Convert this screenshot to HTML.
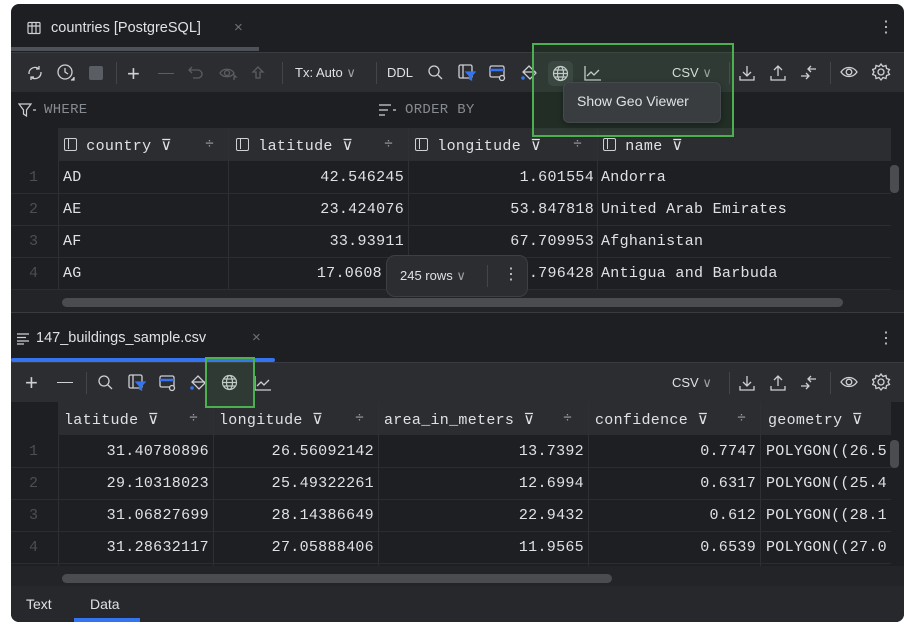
<!DOCTYPE html>
<html><head><meta charset="utf-8"><style>
*{margin:0;padding:0;box-sizing:border-box}
body{width:909px;height:627px;background:#fff;position:relative;overflow:hidden;font-family:"Liberation Sans",sans-serif;color:#dfe1e5}
.a{position:absolute}
#panel{left:11px;top:4px;width:893px;height:618px;background:#1e1f22;border-radius:8px;overflow:hidden}
.ui{font-size:14px;white-space:nowrap}
.mono{font-family:"Liberation Mono",monospace;font-size:15px;white-space:nowrap;letter-spacing:0.3px}
.tb{background:#2b2d30}
.sep{position:absolute;width:1px;height:22px;background:#43454a}
.hl{position:absolute;height:1px;background:#2b2d30}
.vl{position:absolute;width:1px;background:#2e3034}
.num{color:#4b4e54}
.r{text-align:right}
.green{position:absolute;border:2px solid #4cb050;background:rgba(76,176,80,0.10)}
</style></head><body>
<div id="panel" class="a"></div>

<svg class="a" style="left:27px;top:21px" width="14" height="14" viewBox="0 0 14 14" fill="none" stroke="#ced0d6" stroke-width="1.2"><rect x="1" y="1.5" width="12" height="11" rx="1"/><path d="M1 5h12M5 1.5v11M9 1.5v11"/></svg>
<div class="a ui" style="left:51px;top:20px;font-size:14.5px">countries [PostgreSQL]</div>
<div class="a ui" style="left:234px;top:19px;color:#6f737a;font-size:15px">×</div>
<div class="a ui" style="left:878px;top:17px;font-size:16px;color:#ced0d6">⋮</div>
<div class="a" style="left:11px;top:47px;width:248px;height:4px;background:#4e5157"></div>

<div class="a tb" style="left:11px;top:52px;width:893px;height:40px;border-top:1px solid #393b40"></div>
<svg class="a" style="left:26px;top:65px" width="18" height="16" viewBox="0 0 18 16" fill="none" stroke="#ced0d6" stroke-width="1.3"><path d="M3 9a6 6 0 0 1 10-5M15 7a6 6 0 0 1-10 5"/><path d="M13 1v3h-3M5 15v-3h3"/></svg>
<svg class="a" style="left:57px;top:64px" width="18" height="18" viewBox="0 0 18 18" fill="none" stroke="#ced0d6" stroke-width="1.3"><circle cx="8" cy="8" r="7"/><path d="M8 4v4l3 2"/><path d="M14 16h3v-3" fill="#ced0d6"/></svg>
<div class="a" style="left:89px;top:66px;width:14px;height:14px;background:#5a5d63;border-radius:2px"></div>
<div class="sep" style="left:116px;top:62px"></div>
<div class="a ui" style="left:127px;top:61px;font-size:22px;color:#ced0d6;font-weight:300">+</div>
<div class="a" style="left:158px;top:73px;width:16px;height:1.3px;background:#5a5d63"></div>
<svg class="a" style="left:188px;top:65px" width="16" height="16" viewBox="0 0 16 16" fill="none" stroke="#5a5d63" stroke-width="1.3"><path d="M4 2L1 5l3 3M1 5h9a4 4 0 0 1 0 8H5"/></svg>
<svg class="a" style="left:219px;top:65px" width="20" height="16" viewBox="0 0 20 16" fill="none" stroke="#5a5d63" stroke-width="1.3"><path d="M1 8c3-5 11-5 14 0c-3 5-11 5-14 0z"/><circle cx="8" cy="8" r="2.5"/><path d="M14 9l3 3h-2v3" /></svg>
<svg class="a" style="left:250px;top:65px" width="16" height="16" viewBox="0 0 16 16" fill="none" stroke="#5a5d63" stroke-width="1.3"><path d="M8 2L3 7h3v6h4V7h3z"/></svg>
<div class="sep" style="left:282px;top:62px"></div>
<div class="a ui" style="left:295px;top:65px;font-size:13px">Tx: Auto <span style="color:#9da0a8">∨</span></div>
<div class="sep" style="left:376px;top:62px"></div>
<div class="a ui" style="left:387px;top:65px;font-size:13px">DDL</div>
<svg class="a" style="left:427px;top:64px" width="16" height="16" viewBox="0 0 16 16" fill="none" stroke="#ced0d6" stroke-width="1.3"><circle cx="7" cy="7" r="5"/><path d="M11 11l4 4"/></svg>
<svg class="a" style="left:458px;top:64px" width="18" height="18" viewBox="0 0 18 18" fill="none" stroke-width="1.3"><rect x="1" y="1" width="13" height="13" rx="1.5" stroke="#ced0d6"/><path d="M5 1v13" stroke="#ced0d6"/><path d="M8 8h9l-3.5 4v4l-2-1v-3z" fill="#3574f0" stroke="#3574f0"/></svg>
<svg class="a" style="left:489px;top:64px" width="18" height="18" viewBox="0 0 18 18" fill="none" stroke="#ced0d6" stroke-width="1.3"><rect x="1" y="2" width="14" height="11" rx="1.5"/><path d="M1 6h14" stroke="#3574f0" stroke-width="2.5"/><circle cx="13" cy="14" r="2.5" fill="#2b2d30"/></svg>
<svg class="a" style="left:520px;top:64px" width="20" height="18" viewBox="0 0 20 18" fill="none" stroke="#ced0d6" stroke-width="1.3"><path d="M9 2l7 7-6 6-7-7z"/><path d="M3 8h13"/><circle cx="3" cy="14" r="1.8" fill="#3574f0" stroke="none"/></svg>
<div class="a" style="left:548px;top:61px;width:25px;height:25px;background:#393b40;border-radius:5px"></div>
<svg class="a" style="left:552px;top:65px" width="17" height="17" viewBox="0 0 17 17" fill="none" stroke="#ced0d6" stroke-width="1.2"><circle cx="8.5" cy="8.5" r="7"/><ellipse cx="8.5" cy="8.5" rx="3" ry="7"/><path d="M1.5 8.5h14M3 5h11M3 12h11"/></svg>
<svg class="a" style="left:584px;top:65px" width="18" height="16" viewBox="0 0 18 16" fill="none" stroke="#ced0d6" stroke-width="1.3"><path d="M1 1v14h16"/><path d="M3 11l4-4 3 3 5-5"/></svg>
<div class="a ui" style="left:672px;top:65px;font-size:13px">CSV <span style="color:#9da0a8">∨</span></div>
<div class="sep" style="left:729px;top:62px"></div>
<svg class="a" style="left:739px;top:64px" width="16" height="18" viewBox="0 0 16 18" fill="none" stroke="#ced0d6" stroke-width="1.3"><path d="M8 2v10M4 8l4 4 4-4M1 12v4h14v-4"/></svg>
<svg class="a" style="left:770px;top:64px" width="16" height="18" viewBox="0 0 16 18" fill="none" stroke="#ced0d6" stroke-width="1.3"><path d="M8 12V2M4 6l4-4 4 4M1 12v4h14v-4"/></svg>
<svg class="a" style="left:800px;top:64px" width="18" height="18" viewBox="0 0 18 18" fill="none" stroke="#ced0d6" stroke-width="1.3"><path d="M1 12h8M6 9l3 3-3 3M16 5H8M11 2L8 5l3 3"/></svg>
<div class="sep" style="left:830px;top:62px"></div>
<svg class="a" style="left:840px;top:65px" width="20" height="16" viewBox="0 0 20 16" fill="none" stroke="#ced0d6" stroke-width="1.3"><path d="M1 7c4-6 12-6 16 0c-4 6-12 6-16 0z"/><circle cx="9" cy="7" r="2.8"/></svg>
<svg class="a" style="left:872px;top:63px" width="19" height="19" viewBox="0 0 19 19" fill="none" stroke="#ced0d6" stroke-width="1.3"><path d="M9 1l2 2.5 3-1 .5 3 3 1-1.5 2.5 1.5 2.5-3 1-.5 3-3-1L9 17l-2-2.5-3 1-.5-3-3-1L2 9 .5 6.5l3-1 .5-3 3 1z"/><circle cx="9" cy="9" r="3"/></svg>

<svg class="a" style="left:18px;top:103px" width="20" height="14" viewBox="0 0 20 14" fill="none" stroke="#ced0d6" stroke-width="1.2"><path d="M1 1h12L8.5 7v6l-3-2V7z"/><path d="M15 7h3"/></svg>
<div class="a mono" style="left:44px;top:102px;color:#868a91;font-size:14px">WHERE</div>
<svg class="a" style="left:378px;top:104px" width="20" height="12" viewBox="0 0 20 12" fill="none" stroke="#ced0d6" stroke-width="1.2"><path d="M1 1h12M1 6h9M1 11h6M15 6h3"/></svg>
<div class="a mono" style="left:405px;top:102px;color:#868a91;font-size:14px">ORDER BY</div>

<div class="a tb" style="left:11px;top:128px;width:880px;height:33px"></div>
<div class="a" style="left:11px;top:128px;width:47px;height:33px;background:#1e1f22"></div>
<div class="a mono" style="left:64px;top:136px"><span style="display:inline-block;width:13px;height:13px;border:1.3px solid #ced0d6;border-radius:2px;vertical-align:-1px;position:relative"><span style="position:absolute;left:3px;top:0;width:1px;height:10px;background:#ced0d6"></span></span> country &#x22BD;</div>
<div class="a mono" style="left:205px;top:136px;color:#9da0a8">÷</div>
<div class="a mono" style="left:236px;top:136px"><span style="display:inline-block;width:13px;height:13px;border:1.3px solid #ced0d6;border-radius:2px;vertical-align:-1px;position:relative"><span style="position:absolute;left:3px;top:0;width:1px;height:10px;background:#ced0d6"></span></span> latitude &#x22BD;</div>
<div class="a mono" style="left:384px;top:136px;color:#9da0a8">÷</div>
<div class="a mono" style="left:415px;top:136px"><span style="display:inline-block;width:13px;height:13px;border:1.3px solid #ced0d6;border-radius:2px;vertical-align:-1px;position:relative"><span style="position:absolute;left:3px;top:0;width:1px;height:10px;background:#ced0d6"></span></span> longitude &#x22BD;</div>
<div class="a mono" style="left:573px;top:136px;color:#9da0a8">÷</div>
<div class="a mono" style="left:603px;top:136px"><span style="display:inline-block;width:13px;height:13px;border:1.3px solid #ced0d6;border-radius:2px;vertical-align:-1px;position:relative"><span style="position:absolute;left:3px;top:0;width:1px;height:10px;background:#ced0d6"></span></span> name &#x22BD;</div>
<div class="vl" style="left:228px;top:128px;height:162px"></div>
<div class="vl" style="left:408px;top:128px;height:162px"></div>
<div class="vl" style="left:597px;top:128px;height:162px"></div>
<div class="vl" style="left:58px;top:161px;height:129px"></div>

<div class="hl" style="left:11px;top:193px;width:880px"></div>
<div class="hl" style="left:11px;top:225px;width:880px"></div>
<div class="hl" style="left:11px;top:257px;width:880px"></div>
<div class="hl" style="left:11px;top:289px;width:880px"></div>
<div class="a mono num" style="left:29px;top:169px">1</div>
<div class="a mono num" style="left:29px;top:201px">2</div>
<div class="a mono num" style="left:29px;top:233px">3</div>
<div class="a mono num" style="left:29px;top:265px">4</div>
<div class="a mono" style="left:63px;top:169px">AD</div>
<div class="a mono" style="left:63px;top:201px">AE</div>
<div class="a mono" style="left:63px;top:233px">AF</div>
<div class="a mono" style="left:63px;top:265px">AG</div>
<div class="a mono r" style="left:230px;width:174px;top:169px">42.546245</div>
<div class="a mono r" style="left:230px;width:174px;top:201px">23.424076</div>
<div class="a mono r" style="left:230px;width:174px;top:233px">33.93911</div>
<div class="a mono r" style="left:230px;width:152px;top:265px">17.0608</div>
<div class="a mono r" style="left:410px;width:184px;top:169px">1.601554</div>
<div class="a mono r" style="left:410px;width:184px;top:201px">53.847818</div>
<div class="a mono r" style="left:410px;width:184px;top:233px">67.709953</div>
<div class="a mono r" style="left:410px;width:184px;top:265px">61.796428</div>
<div class="a mono" style="left:601px;top:169px">Andorra</div>
<div class="a mono" style="left:601px;top:201px">United Arab Emirates</div>
<div class="a mono" style="left:601px;top:233px">Afghanistan</div>
<div class="a mono" style="left:601px;top:265px">Antigua and Barbuda</div>
<div class="a" style="left:890px;top:165px;width:9px;height:28px;background:#4a4c50;border-radius:4px"></div>
<div class="a" style="left:11px;top:290px;width:893px;height:22px;background:#232427"></div>
<div class="a" style="left:62px;top:298px;width:781px;height:9px;background:#4a4c50;border-radius:5px"></div>
<div class="a" style="left:11px;top:312px;width:893px;height:1px;background:#393b40"></div>

<div class="a" style="left:386px;top:255px;width:142px;height:42px;background:#2b2d30;border:1px solid #3c3f44;border-radius:9px"></div>
<div class="a ui" style="left:400px;top:268px;font-size:13px">245 rows <span style="color:#9da0a8">∨</span></div>
<div class="a" style="left:487px;top:265px;width:1px;height:22px;background:#43454a"></div>
<div class="a ui" style="left:503px;top:264px;font-size:16px;color:#ced0d6">⋮</div>

<svg class="a" style="left:16px;top:333px" width="14" height="12" viewBox="0 0 14 12" fill="none" stroke="#ced0d6" stroke-width="1.2"><path d="M1 1h12M1 4.5h9M1 8h12M1 11h7"/></svg>
<div class="a ui" style="left:36px;top:330px;font-size:14.5px">147_buildings_sample.csv</div>
<div class="a ui" style="left:252px;top:329px;color:#6f737a;font-size:15px">×</div>
<div class="a ui" style="left:878px;top:328px;font-size:16px;color:#ced0d6">⋮</div>
<div class="a" style="left:11px;top:358px;width:264px;height:4px;background:#3574f0;border-radius:2px"></div>

<div class="a tb" style="left:11px;top:362px;width:893px;height:40px;border-top:1px solid #393b40"></div>
<div class="a ui" style="left:25px;top:370px;font-size:22px;color:#ced0d6;font-weight:300">+</div>
<div class="a" style="left:57px;top:382px;width:16px;height:1.3px;background:#ced0d6"></div>
<div class="sep" style="left:86px;top:372px"></div>
<svg class="a" style="left:97px;top:374px" width="16" height="16" viewBox="0 0 16 16" fill="none" stroke="#ced0d6" stroke-width="1.3"><circle cx="7" cy="7" r="5"/><path d="M11 11l4 4"/></svg>
<svg class="a" style="left:128px;top:374px" width="18" height="18" viewBox="0 0 18 18" fill="none" stroke-width="1.3"><rect x="1" y="1" width="13" height="13" rx="1.5" stroke="#ced0d6"/><path d="M5 1v13" stroke="#ced0d6"/><path d="M8 8h9l-3.5 4v4l-2-1v-3z" fill="#3574f0" stroke="#3574f0"/></svg>
<svg class="a" style="left:159px;top:374px" width="18" height="18" viewBox="0 0 18 18" fill="none" stroke="#ced0d6" stroke-width="1.3"><rect x="1" y="2" width="14" height="11" rx="1.5"/><path d="M1 6h14" stroke="#3574f0" stroke-width="2.5"/><circle cx="13" cy="14" r="2.5" fill="#2b2d30"/></svg>
<svg class="a" style="left:189px;top:374px" width="20" height="18" viewBox="0 0 20 18" fill="none" stroke="#ced0d6" stroke-width="1.3"><path d="M9 2l7 7-6 6-7-7z"/><path d="M3 8h13"/><circle cx="3" cy="14" r="1.8" fill="#3574f0" stroke="none"/></svg>
<svg class="a" style="left:221px;top:374px" width="17" height="17" viewBox="0 0 17 17" fill="none" stroke="#ced0d6" stroke-width="1.2"><circle cx="8.5" cy="8.5" r="7"/><ellipse cx="8.5" cy="8.5" rx="3" ry="7"/><path d="M1.5 8.5h14M3 5h11M3 12h11"/></svg>
<svg class="a" style="left:254px;top:375px" width="18" height="16" viewBox="0 0 18 16" fill="none" stroke="#ced0d6" stroke-width="1.3"><path d="M1 1v14h16"/><path d="M3 11l4-4 3 3 5-5"/></svg>
<div class="a ui" style="left:672px;top:375px;font-size:13px">CSV <span style="color:#9da0a8">∨</span></div>
<div class="sep" style="left:729px;top:372px"></div>
<svg class="a" style="left:739px;top:374px" width="16" height="18" viewBox="0 0 16 18" fill="none" stroke="#ced0d6" stroke-width="1.3"><path d="M8 2v10M4 8l4 4 4-4M1 12v4h14v-4"/></svg>
<svg class="a" style="left:770px;top:374px" width="16" height="18" viewBox="0 0 16 18" fill="none" stroke="#ced0d6" stroke-width="1.3"><path d="M8 12V2M4 6l4-4 4 4M1 12v4h14v-4"/></svg>
<svg class="a" style="left:800px;top:374px" width="18" height="18" viewBox="0 0 18 18" fill="none" stroke="#ced0d6" stroke-width="1.3"><path d="M1 12h8M6 9l3 3-3 3M16 5H8M11 2L8 5l3 3"/></svg>
<div class="sep" style="left:830px;top:372px"></div>
<svg class="a" style="left:840px;top:375px" width="20" height="16" viewBox="0 0 20 16" fill="none" stroke="#ced0d6" stroke-width="1.3"><path d="M1 7c4-6 12-6 16 0c-4 6-12 6-16 0z"/><circle cx="9" cy="7" r="2.8"/></svg>
<svg class="a" style="left:872px;top:373px" width="19" height="19" viewBox="0 0 19 19" fill="none" stroke="#ced0d6" stroke-width="1.3"><path d="M9 1l2 2.5 3-1 .5 3 3 1-1.5 2.5 1.5 2.5-3 1-.5 3-3-1L9 17l-2-2.5-3 1-.5-3-3-1L2 9 .5 6.5l3-1 .5-3 3 1z"/><circle cx="9" cy="9" r="3"/></svg>

<div class="a tb" style="left:11px;top:402px;width:880px;height:33px"></div>
<div class="a" style="left:11px;top:402px;width:47px;height:33px;background:#1e1f22"></div>
<div class="a mono" style="left:64px;top:410px">latitude &#x22BD;</div>
<div class="a mono" style="left:189px;top:410px;color:#9da0a8">÷</div>
<div class="a mono" style="left:219px;top:410px">longitude &#x22BD;</div>
<div class="a mono" style="left:355px;top:410px;color:#9da0a8">÷</div>
<div class="a mono" style="left:384px;top:410px">area_in_meters &#x22BD;</div>
<div class="a mono" style="left:563px;top:410px;color:#9da0a8">÷</div>
<div class="a mono" style="left:595px;top:410px">confidence &#x22BD;</div>
<div class="a mono" style="left:737px;top:410px;color:#9da0a8">÷</div>
<div class="a mono" style="left:768px;top:410px">geometry &#x22BD;</div>
<div class="vl" style="left:213px;top:402px;height:164px"></div>
<div class="vl" style="left:378px;top:402px;height:164px"></div>
<div class="vl" style="left:588px;top:402px;height:164px"></div>
<div class="vl" style="left:760px;top:402px;height:164px"></div>
<div class="vl" style="left:58px;top:435px;height:131px"></div>

<div class="hl" style="left:11px;top:467px;width:880px"></div>
<div class="hl" style="left:11px;top:499px;width:880px"></div>
<div class="hl" style="left:11px;top:531px;width:880px"></div>
<div class="hl" style="left:11px;top:563px;width:880px"></div>
<div class="a mono num" style="left:29px;top:443px">1</div>
<div class="a mono num" style="left:29px;top:475px">2</div>
<div class="a mono num" style="left:29px;top:507px">3</div>
<div class="a mono num" style="left:29px;top:539px">4</div>
<div class="a mono r" style="left:60px;width:149px;top:443px">31.40780896</div>
<div class="a mono r" style="left:60px;width:149px;top:475px">29.10318023</div>
<div class="a mono r" style="left:60px;width:149px;top:507px">31.06827699</div>
<div class="a mono r" style="left:60px;width:149px;top:539px">31.28632117</div>
<div class="a mono r" style="left:215px;width:159px;top:443px">26.56092142</div>
<div class="a mono r" style="left:215px;width:159px;top:475px">25.49322261</div>
<div class="a mono r" style="left:215px;width:159px;top:507px">28.14386649</div>
<div class="a mono r" style="left:215px;width:159px;top:539px">27.05888406</div>
<div class="a mono r" style="left:380px;width:204px;top:443px">13.7392</div>
<div class="a mono r" style="left:380px;width:204px;top:475px">12.6994</div>
<div class="a mono r" style="left:380px;width:204px;top:507px">22.9432</div>
<div class="a mono r" style="left:380px;width:204px;top:539px">11.9565</div>
<div class="a mono r" style="left:590px;width:166px;top:443px">0.7747</div>
<div class="a mono r" style="left:590px;width:166px;top:475px">0.6317</div>
<div class="a mono r" style="left:590px;width:166px;top:507px">0.612</div>
<div class="a mono r" style="left:590px;width:166px;top:539px">0.6539</div>
<div class="a" style="left:761px;top:436px;width:129px;height:128px;overflow:hidden">
<div class="a mono" style="left:5px;top:7px">POLYGON((26.5</div>
<div class="a mono" style="left:5px;top:39px">POLYGON((25.4</div>
<div class="a mono" style="left:5px;top:71px">POLYGON((28.1</div>
<div class="a mono" style="left:5px;top:103px">POLYGON((27.0</div>
</div>
<div class="a" style="left:890px;top:440px;width:9px;height:28px;background:#4a4c50;border-radius:4px"></div>
<div class="a" style="left:11px;top:566px;width:893px;height:20px;background:#232427"></div>
<div class="a" style="left:62px;top:574px;width:550px;height:9px;background:#4a4c50;border-radius:5px"></div>

<div class="a" style="left:11px;top:586px;width:893px;height:36px;background:#26282b;border-radius:0 0 8px 8px"></div>
<div class="a ui" style="left:26px;top:596px">Text</div>
<div class="a ui" style="left:90px;top:596px">Data</div>
<div class="a" style="left:74px;top:618px;width:66px;height:4px;background:#3574f0"></div>

<div class="green" style="left:532px;top:43px;width:202px;height:94px"></div>
<div class="a" style="left:563px;top:82px;width:158px;height:41px;background:#3a3d40;border:1px solid #45484c;border-radius:6px;box-shadow:0 2px 6px rgba(0,0,0,.3)"></div>
<div class="a ui" style="left:577px;top:93px;font-size:14px">Show Geo Viewer</div>
<div class="green" style="left:205px;top:357px;width:50px;height:51px"></div>
</body></html>
